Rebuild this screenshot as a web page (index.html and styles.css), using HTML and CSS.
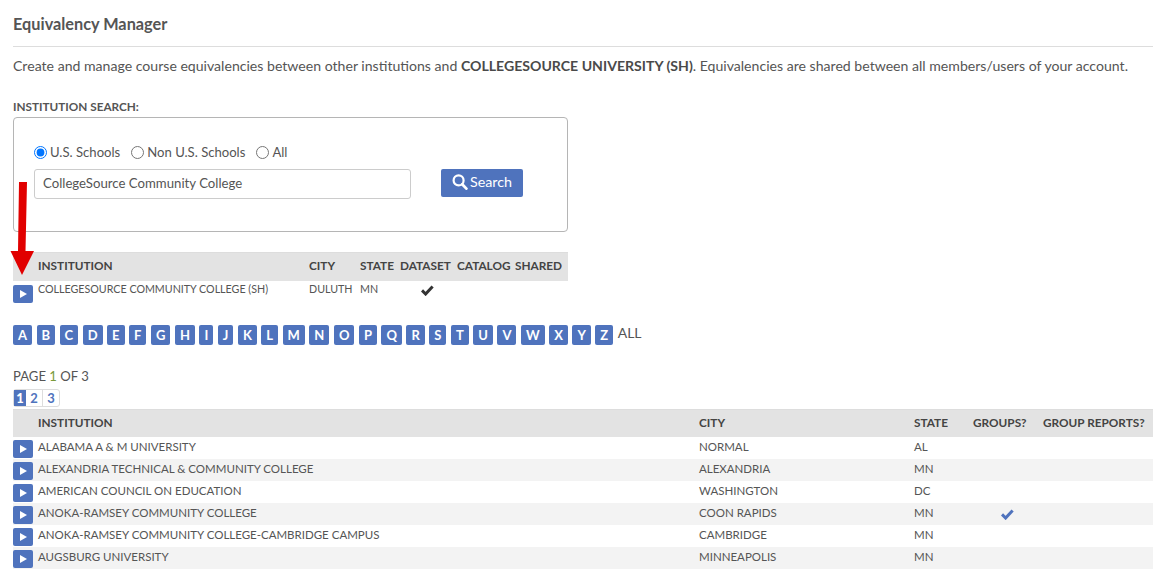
FILE: index.html
```html
<!DOCTYPE html>
<html lang="en">
<head>
<meta charset="utf-8">
<title>Equivalency Manager</title>
<link rel="stylesheet" href="styles.css">
</head>
<body>
<main class="page">
  <h1 class="title">Equivalency Manager</h1>
  <p class="intro">Create and manage course equivalencies between other institutions and <strong>COLLEGESOURCE UNIVERSITY (SH)</strong>. Equivalencies are shared between all members/users of your account.</p>
  <div class="label">INSTITUTION SEARCH:</div>
  <form class="search">
    <div class="radios">
      <label class="radio"><input type="radio" name="s" checked>U.S. Schools</label>
      <label class="radio"><input type="radio" name="s">Non U.S. Schools</label>
      <label class="radio"><input type="radio" name="s">All</label>
    </div>
    <div class="search-row">
      <input class="text" type="text" value="CollegeSource Community College">
      <button class="go" type="button"><svg width="16" height="16" viewBox="0 0 16 16"><circle cx="6.6" cy="6.4" r="5" fill="none" stroke="#fff" stroke-width="2.2"/><path d="M10.2 10.2 14.4 14.6" stroke="#fff" stroke-width="2.8" stroke-linecap="round"/></svg>Search</button>
    </div>
  </form>

  <table class="grid small">
    <colgroup><col class="c-a"><col class="c-b"><col class="c-c"><col class="c-d"><col class="c-e"><col class="c-f"><col class="c-g"></colgroup>
    <thead><tr><th></th><th>INSTITUTION</th><th>CITY</th><th>STATE</th><th>DATASET</th><th>CATALOG</th><th>SHARED</th></tr></thead>
    <tbody><tr><td><span class="play"><i></i></span></td><td class="tiny">COLLEGESOURCE COMMUNITY COLLEGE (SH)</td><td class="tiny">DULUTH</td><td class="tiny">MN</td><td class="mid"><svg class="check" width="13" height="11" viewBox="0 0 13 11"><path d="M1 5.400 4.600 9 11.600 1.400" fill="none" stroke="#333" stroke-width="3"/></svg></td><td></td><td></td></tr></tbody>
  </table>

  <nav class="alpha">
    <a>A</a><a>B</a><a>C</a><a>D</a><a>E</a><a>F</a><a>G</a><a>H</a><a>I</a><a>J</a><a>K</a><a>L</a><a>M</a><a>N</a><a>O</a><a>P</a><a>Q</a><a>R</a><a>S</a><a>T</a><a>U</a><a>V</a><a>W</a><a>X</a><a>Y</a><a>Z</a><span class="all">ALL</span>
  </nav>

  <div class="pageof">PAGE <span class="cur">1</span> OF 3</div>
  <div class="pager"><b>1</b><a>2</a><a>3</a></div>

  <table class="grid big">
    <colgroup><col class="d-a"><col class="d-b"><col class="d-c"><col class="d-d"><col class="d-e"><col class="d-f"></colgroup>
    <thead><tr><th></th><th>INSTITUTION</th><th>CITY</th><th>STATE</th><th>GROUPS?</th><th>GROUP REPORTS?</th></tr></thead>
    <tbody>
      <tr><td><span class="play"><i></i></span></td><td>ALABAMA A &amp; M UNIVERSITY</td><td>NORMAL</td><td>AL</td><td></td><td></td></tr>
      <tr><td><span class="play"><i></i></span></td><td>ALEXANDRIA TECHNICAL &amp; COMMUNITY COLLEGE</td><td>ALEXANDRIA</td><td>MN</td><td></td><td></td></tr>
      <tr><td><span class="play"><i></i></span></td><td>AMERICAN COUNCIL ON EDUCATION</td><td>WASHINGTON</td><td>DC</td><td></td><td></td></tr>
      <tr><td><span class="play"><i></i></span></td><td>ANOKA-RAMSEY COMMUNITY COLLEGE</td><td>COON RAPIDS</td><td>MN</td><td class="mid"><svg class="check blue" width="13" height="11" viewBox="0 0 13 11"><path d="M1 5.400 4.600 9 11.600 1.400" fill="none" stroke="#4f73bd" stroke-width="3"/></svg></td><td></td></tr>
      <tr><td><span class="play"><i></i></span></td><td>ANOKA-RAMSEY COMMUNITY COLLEGE-CAMBRIDGE CAMPUS</td><td>CAMBRIDGE</td><td>MN</td><td></td><td></td></tr>
      <tr><td><span class="play"><i></i></span></td><td>AUGSBURG UNIVERSITY</td><td>MINNEAPOLIS</td><td>MN</td><td></td><td></td></tr>
    </tbody>
  </table>
</main>
<svg class="arrow" width="24" height="94" viewBox="0 0 24 94"><path d="M9 0H17L15.500 69H24L12 93 0.500 69H8Z" fill="#e10000"/></svg>
</body>
</html>
```
FILE: styles.css
```css
* { box-sizing: border-box; }
html, body { margin: 0; height: 570px; overflow: hidden; background: #fff; }
body { font-family: Lato, "Open Sans", sans-serif; color: #555; position: relative; }
.page { padding: 15px 16px 0 13px; }
.title { margin: 0; height: 32px; font-size: 16.300px; line-height: 18px; font-weight: 700; border-bottom: 1px solid #ddd; }
.intro { margin: 10px 0 0; font-size: 14.100px; line-height: 18px; white-space: nowrap; }
.intro strong { color: #4a4a4a; }
.label { margin-top: 25px; font-size: 11.750px; line-height: 14px; font-weight: 700; }
.search { margin-top: 3px; width: 555px; height: 115px; border: 1px solid #b5b5b5; border-radius: 4px; padding: 26px 20px 0; }
.radios { display: flex; gap: 11px; height: 16px; align-items: center; font-size: 13.100px; }
.radio { display: flex; align-items: center; }
.radio input { margin: 0 3px 0 0; width: 13px; height: 13px; }
.search-row { display: flex; gap: 30px; margin-top: 9px; }
.text { width: 377px; height: 30px; border: 1px solid #ccc; border-radius: 3px; padding: 0 8px 2px; font: 13.200px Lato, sans-serif; color: #555; }
.go { width: 82px; height: 28px; border: 0; border-radius: 2px; background: #4f73bd; color: #fff; font: 14.300px Lato, sans-serif; display: flex; align-items: center; justify-content: center; gap: 2px; padding: 0 0 3px; }
.grid { border-collapse: collapse; table-layout: fixed; }
.small { width: 555px; margin-top: 20px; }
.big { width: 1140px; margin-top: 2px; }
th { height: 28px; padding: 0 0 2px; background: #e3e3e3; text-align: left; font-size: 11.800px; font-weight: 700; color: #444; border-top: 1px solid #ddd; }
td { padding: 0; height: 22px; font-size: 11.500px; vertical-align: top; line-height: 19px; white-space: nowrap; overflow: visible; }
.big tbody tr:nth-child(even) td { background: #f3f3f3; }
.small td { height: 26px; }
.small td.tiny { font-size: 10.700px; line-height: 15px; }
.mid { text-align: center; }
.check { display: block; margin: 4px auto 0; position: relative; left: -1px; }
.check.blue { margin-top: 6px; }
.c-a { width: 25px; } .c-b { width: 271px; } .c-c { width: 51px; } .c-d { width: 40px; } .c-e { width: 57px; } .c-f { width: 58px; } .c-g { width: 53px; }
.d-a { width: 25px; } .d-b { width: 661px; } .d-c { width: 215px; } .d-d { width: 59px; } .d-e { width: 70px; } .d-f { width: 110px; }
.play { display: flex; width: 20px; height: 18px; margin-top: 3px; border-radius: 2px; background: #4f73bd; align-items: center; justify-content: center; }
.small .play { margin-top: 4px; }
.play i { width: 0; height: 0; border-left: 7px solid #fff; border-top: 4px solid transparent; border-bottom: 4px solid transparent; }
.alpha { display: flex; align-items: center; gap: 4.500px; margin-top: 18px; height: 20px; }
.alpha a { height: 20px; padding: 0 5px; border-radius: 2px; background: #4f73bd; color: #fff; font-size: 13px; font-weight: 700; line-height: 20px; text-align: center; }
.all { font-size: 14px; margin-top: -5px; }
.pageof { margin-top: 21px; font-size: 13.100px; line-height: 20px; }
.cur { color: #7a9a3a; }
.pager { display: flex; width: 47px; margin-top: 3px; height: 18px; border: 1px solid #ddd; border-radius: 3px; font-size: 13px; line-height: 16px; font-weight: 700; }
.pager b, .pager a { width: 17px; text-align: center; color: #4f73bd; border-right: 1px solid #ddd; }
.pager b { background: #4f73bd; color: #fff; width: 12px; border: 0; }
.pager a:last-child { width: 16px; border-right: 0; }
.arrow { position: absolute; left: 10px; top: 182px; }
```
